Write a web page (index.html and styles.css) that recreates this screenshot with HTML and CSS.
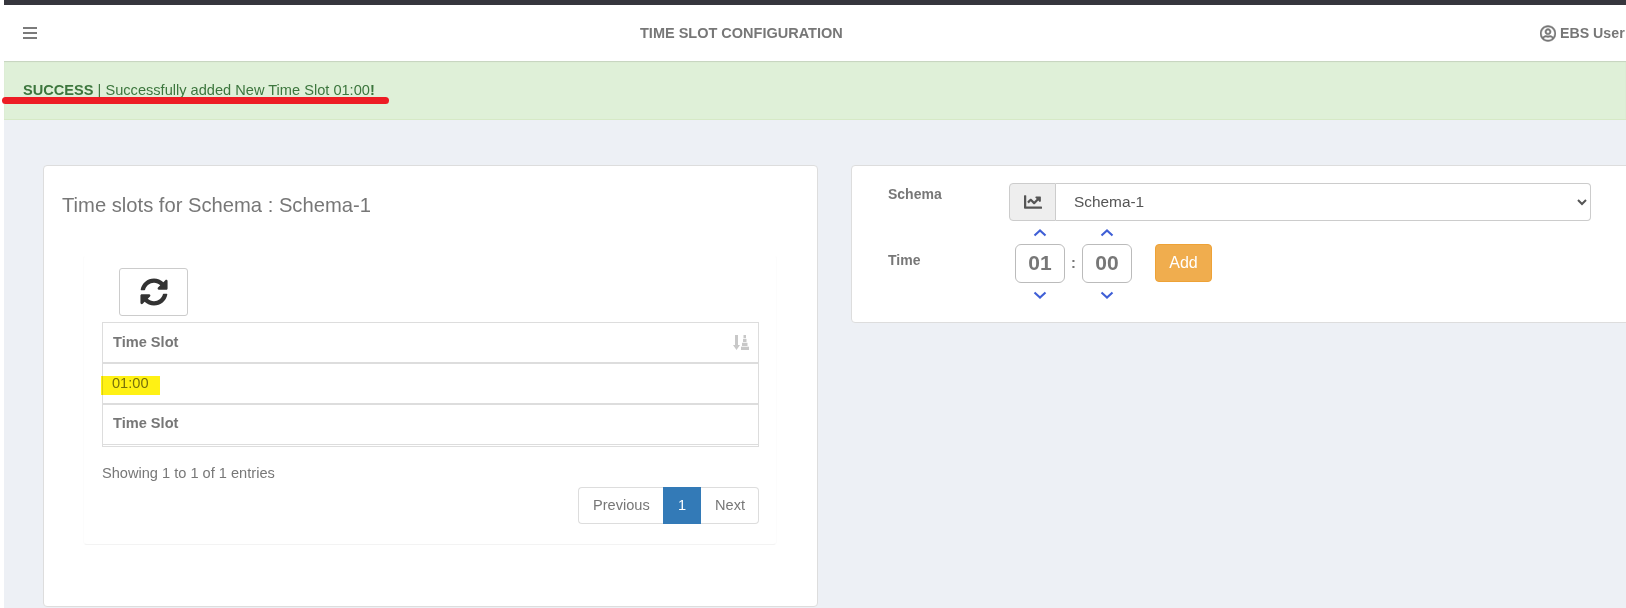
FILE: index.html
```html
<!DOCTYPE html>
<html lang="en">
<head>
<meta charset="utf-8">
<title>Time Slot Configuration</title>
<link rel="stylesheet" href="styles.css">
</head>
<body>
<div class="page">
  <div class="topbar"></div>
  <header class="navbar">
    <svg class="burger" viewBox="0 0 14 12"><rect y="0" width="14" height="2"/><rect y="5" width="14" height="2"/><rect y="10" width="14" height="2"/></svg>
    <div class="nav-title">TIME SLOT CONFIGURATION</div>
    <div class="nav-user">
      <svg class="user-icon" viewBox="0 0 496 512"><path d="M248 104c-53 0-96 43-96 96s43 96 96 96 96-43 96-96-43-96-96-96zm0 144c-26.500 0-48-21.500-48-48s21.500-48 48-48 48 21.500 48 48-21.500 48-48 48zm0-240C111 8 0 119 0 256s111 248 248 248 248-111 248-248S385 8 248 8zm0 448c-49.700 0-95.100-18.300-130.100-48.400 14.900-23 40.400-38.600 69.600-39.500 20.800 6.400 40.600 9.600 60.500 9.600s39.700-3.100 60.500-9.600c29.200 1 54.700 16.500 69.600 39.500-35 30.100-80.400 48.400-130.100 48.400zm162.700-84.100c-24.400-31.400-62.100-51.900-105.100-51.900-10.200 0-26 9.600-57.600 9.600-31.500 0-47.400-9.600-57.600-9.600-42.900 0-80.600 20.500-105.100 51.900C61.900 339.200 48 299.200 48 256c0-110.300 89.700-200 200-200s200 89.700 200 200c0 43.200-13.900 83.200-37.300 115.900z"/></svg>
      <span>EBS User</span>
    </div>
  </header>
  <div class="alert"><strong>SUCCESS</strong> | Successfully added New Time Slot 01:00<strong>!</strong></div>
  <main class="content">
    <section class="card card-left">
      <h3 class="card-title">Time slots for Schema : Schema-1</h3>
      <div class="inner">
        <button class="refresh" type="button" aria-label="Refresh">
          <svg viewBox="0 0 512 512"><path d="M370.720 133.280C339.458 104.008 298.888 87.962 255.848 88c-77.458.068-144.328 53.178-162.791 126.850-1.344 5.363-6.122 9.150-11.651 9.150H24.103c-7.498 0-13.194-6.807-11.807-14.176C33.933 94.924 134.813 8 256 8c66.448 0 126.791 26.136 171.315 68.685L463.030 40.970C478.149 25.851 504 36.559 504 57.941V192c0 13.255-10.745 24-24 24H345.941c-21.382 0-32.090-25.851-16.971-40.971l41.750-41.749zM32 296h134.059c21.382 0 32.090 25.851 16.971 40.971l-41.750 41.750c31.262 29.273 71.835 45.319 114.876 45.280 77.418-.070 144.315-53.144 162.787-126.849 1.344-5.363 6.122-9.150 11.651-9.150h57.304c7.498 0 13.194 6.807 11.807 14.176C478.067 417.076 377.187 504 256 504c-66.448 0-126.791-26.136-171.315-68.685L48.970 471.030C33.851 486.149 8 475.441 8 454.059V320c0-13.255 10.745-24 24-24z"/></svg>
        </button>
        <table class="slots">
          <thead>
            <tr><th><span class="th-row">Time Slot
              <svg class="sort-icon" viewBox="0 0 16 15"><path d="M2 0h3v10h2L3.500 15 0 10h2z"/><rect x="10.500" y="0" width="2.500" height="3.200"/><rect x="10" y="3.900" width="3.500" height="3.200"/><rect x="9" y="7.800" width="5.500" height="3.200"/><rect x="8" y="11.700" width="8" height="3.300"/></svg>
            </span></th></tr>
          </thead>
          <tbody>
            <tr><td class="cell-hl">01:00<span class="highlight"></span></td></tr>
          </tbody>
          <tfoot>
            <tr><th>Time Slot</th></tr>
          </tfoot>
        </table>
        <div class="info">Showing 1 to 1 of 1 entries</div>
        <nav class="pager">
          <a class="page-link page-prev">Previous</a><a class="page-link page-cur">1</a><a class="page-link page-next">Next</a>
        </nav>
      </div>
    </section>
    <section class="card card-right">
      <div class="form-row row-schema">
        <label class="form-label label-schema">Schema</label>
        <div class="input-group">
          <span class="addon">
            <svg viewBox="0 0 512 512"><path d="M496 384H64V80c0-8.840-7.160-16-16-16H16C7.160 64 0 71.160 0 80v336c0 17.670 14.330 32 32 32h464c8.840 0 16-7.160 16-16v-32c0-8.840-7.160-16-16-16zM464 96H345.940c-21.380 0-32.090 25.850-16.970 40.970l32.400 32.400L288 242.750l-73.370-73.370c-12.500-12.500-32.760-12.500-45.250 0l-68.690 68.690c-6.250 6.250-6.250 16.380 0 22.630l22.620 22.620c6.250 6.250 16.380 6.250 22.630 0L192 237.250l73.370 73.370c12.500 12.500 32.760 12.500 45.250 0l96-96 32.400 32.400c15.120 15.120 40.970 4.410 40.970-16.970V112c0-8.840-7.160-16-16-16z"/></svg>
          </span>
          <select class="select"><option>Schema-1</option></select>
        </div>
      </div>
      <div class="form-row row-time">
        <label class="form-label label-time">Time</label>
        <div class="time">
          <div class="spinner">
            <svg class="chev" viewBox="0 0 14 8"><path d="M1.500 6.500 7 1.500l5.500 5"/></svg>
            <input class="time-input" value="01" aria-label="Hours">
            <svg class="chev" viewBox="0 0 14 8"><path d="M1.500 1.500 7 6.500l5.500-5"/></svg>
          </div>
          <span class="colon">:</span>
          <div class="spinner">
            <svg class="chev" viewBox="0 0 14 8"><path d="M1.500 6.500 7 1.500l5.500 5"/></svg>
            <input class="time-input" value="00" aria-label="Minutes">
            <svg class="chev" viewBox="0 0 14 8"><path d="M1.500 1.500 7 6.500l5.500-5"/></svg>
          </div>
          <button class="add" type="button">Add</button>
        </div>
      </div>
    </section>
  </main>
  <div class="red-mark"></div>
</div>
</body>
</html>
```

FILE: styles.css
```css
* { box-sizing: border-box; }
html, body { margin: 0; height: 608px; overflow: hidden; background: #fff; }
body { font-family: "Liberation Sans", Arial, sans-serif; font-size: 14.6px; line-height: 20px; color: #777; }

.page { position: relative; width: 1626px; height: 608px; background: #fff; overflow: hidden; }
.topbar { margin-left: 4px; height: 5px; background: #36363d; }

.navbar { display: flex; align-items: center; height: 56px; background: #fff; padding-left: 23px; }
.burger { width: 14px; height: 12px; fill: #7b7b7b; flex: none; }
.nav-title { margin-left: 603px; width: 205px; font-weight: 700; font-size: 14.5px; color: #777; white-space: nowrap; flex: none; }
.nav-user { margin-left: 695px; display: flex; align-items: center; gap: 4px; font-weight: 700; font-size: 14.2px; color: #777; white-space: nowrap; flex: none; }
.user-icon { width: 16px; height: 17px; fill: #777; stroke: #777; stroke-width: 14; flex: none; }

.alert { margin-left: 4px; height: 59px; padding: 19px 19px 0; background: #dff0d8; border-bottom: 1px solid #d6e9c6; box-shadow: inset 0 1px 1px #c6d3bf; color: #3c763d; }

.content { margin-left: 4px; height: 488px; padding: 45px 0 0 39px; background: #edf0f5; display: flex; align-items: flex-start; gap: 33px; }
.card { background: #fff; border: 1px solid #ddd; border-radius: 4px; flex: none; }
.card-left { width: 775px; height: 442px; padding: 28px 18px 0; }
.card-right { width: 780px; height: 158px; padding: 17px 0 0 36px; }

.card-title { margin: 0; font-size: 20.2px; font-weight: 400; line-height: 22px; color: #777; }

.inner { margin: 39px 0 0 21px; width: 694px; height: 290px; padding: 12px 18px 0; border: 1px solid #fcfcfc; border-top-color: #fff; border-bottom-color: #f3f3f3; border-radius: 4px; }
.refresh { display: flex; align-items: center; justify-content: center; margin-left: 17px; width: 69px; height: 48px; padding: 0; background: #fff; border: 1px solid #ccc; border-radius: 3px; }
.refresh svg { width: 28px; height: 28px; fill: #333; }

.slots { width: 657px; margin-top: 6px; padding-bottom: 1px; border-collapse: separate; border-spacing: 0; border: 1px solid #ddd; table-layout: fixed; }
.slots th, .slots td { padding: 0 10px; text-align: left; }
.slots th { font-weight: 700; color: #777; }
.slots thead th { height: 41px; padding-bottom: 1px; border-bottom: 2px solid #ddd; }
.slots tbody td { height: 41px; padding-bottom: 2px; border-bottom: 2px solid #ddd; color: #777; padding-left: 9px; }
.slots tfoot th { height: 40px; padding-bottom: 3px; border-bottom: 1px solid #ddd; }
.th-row { display: flex; align-items: center; justify-content: space-between; }
.sort-icon { width: 16px; height: 15px; fill: #c8c8c8; margin-right: -1px; flex: none; }

.cell-hl { position: relative; }
.highlight { position: absolute; left: -2px; top: 12px; width: 59px; height: 19px; background: rgba(255, 240, 0, .92); mix-blend-mode: multiply; }

.info { margin-top: 16px; }
.pager { display: flex; justify-content: flex-end; width: 657px; margin-top: 4px; height: 37px; }
.page-link { display: block; height: 37px; padding: 7px 14px; border: 1px solid #ddd; color: #777; background: #fff; }
.page-prev { border-radius: 4px 0 0 4px; border-right: 0; width: 85px; }
.page-cur { width: 38px; text-align: center; padding: 7px 0; background: #337ab7; border-color: #337ab7; color: #fff; }
.page-next { border-radius: 0 4px 4px 0; border-left: 0; width: 58px; }

.form-row { display: flex; }
.form-label { width: 121px; flex: none; font-weight: 700; font-size: 14px; color: #777; }
.label-schema { padding-top: 1px; }
.input-group { display: flex; width: 582px; height: 38px; }
.addon { width: 47px; flex: none; display: flex; align-items: center; justify-content: center; background: #eee; border: 1px solid #ccc; border-radius: 4px 0 0 4px; }
.addon svg { width: 18px; height: 18px; fill: #555; }
.select { flex: 1; height: 38px; padding: 0 14px 1px; background: #fff; border: 1px solid #ccc; border-left: 0; border-radius: 0 4px 4px 0; font: 15.4px/20px "Liberation Sans", Arial, sans-serif; color: #555; }

.row-time { margin-top: 8px; }
.label-time { padding-top: 21px; }
.time { display: flex; align-items: flex-start; margin-left: 6px; }
.spinner { display: flex; flex-direction: column; align-items: center; width: 50px; }
.chev { width: 14px; height: 8px; fill: none; stroke: #3f5fd6; stroke-width: 2.1; }
.spinner .chev:first-child { margin: 0 0 7px; }
.spinner .chev:last-child { margin: 8px 0 0; }
.time-input { width: 50px; height: 39px; padding: 0 0 2px; text-align: center; border: 1px solid #bbb; border-radius: 6px; font: 700 21px "Liberation Sans", Arial, sans-serif; color: #777; background: #fff; }
.colon { width: 17px; margin-top: 24px; text-align: center; font-weight: 700; color: #777; }
.add { margin: 15px 0 0 23px; width: 57px; height: 38px; padding: 0; background: #f0ad4e; border: 1px solid #eea236; border-radius: 4px; color: #fff; font: 16px "Liberation Sans", Arial, sans-serif; }

.red-mark { position: absolute; left: 2px; top: 97px; width: 387px; height: 7px; background: #ed1c24; border-radius: 4px; }
```
